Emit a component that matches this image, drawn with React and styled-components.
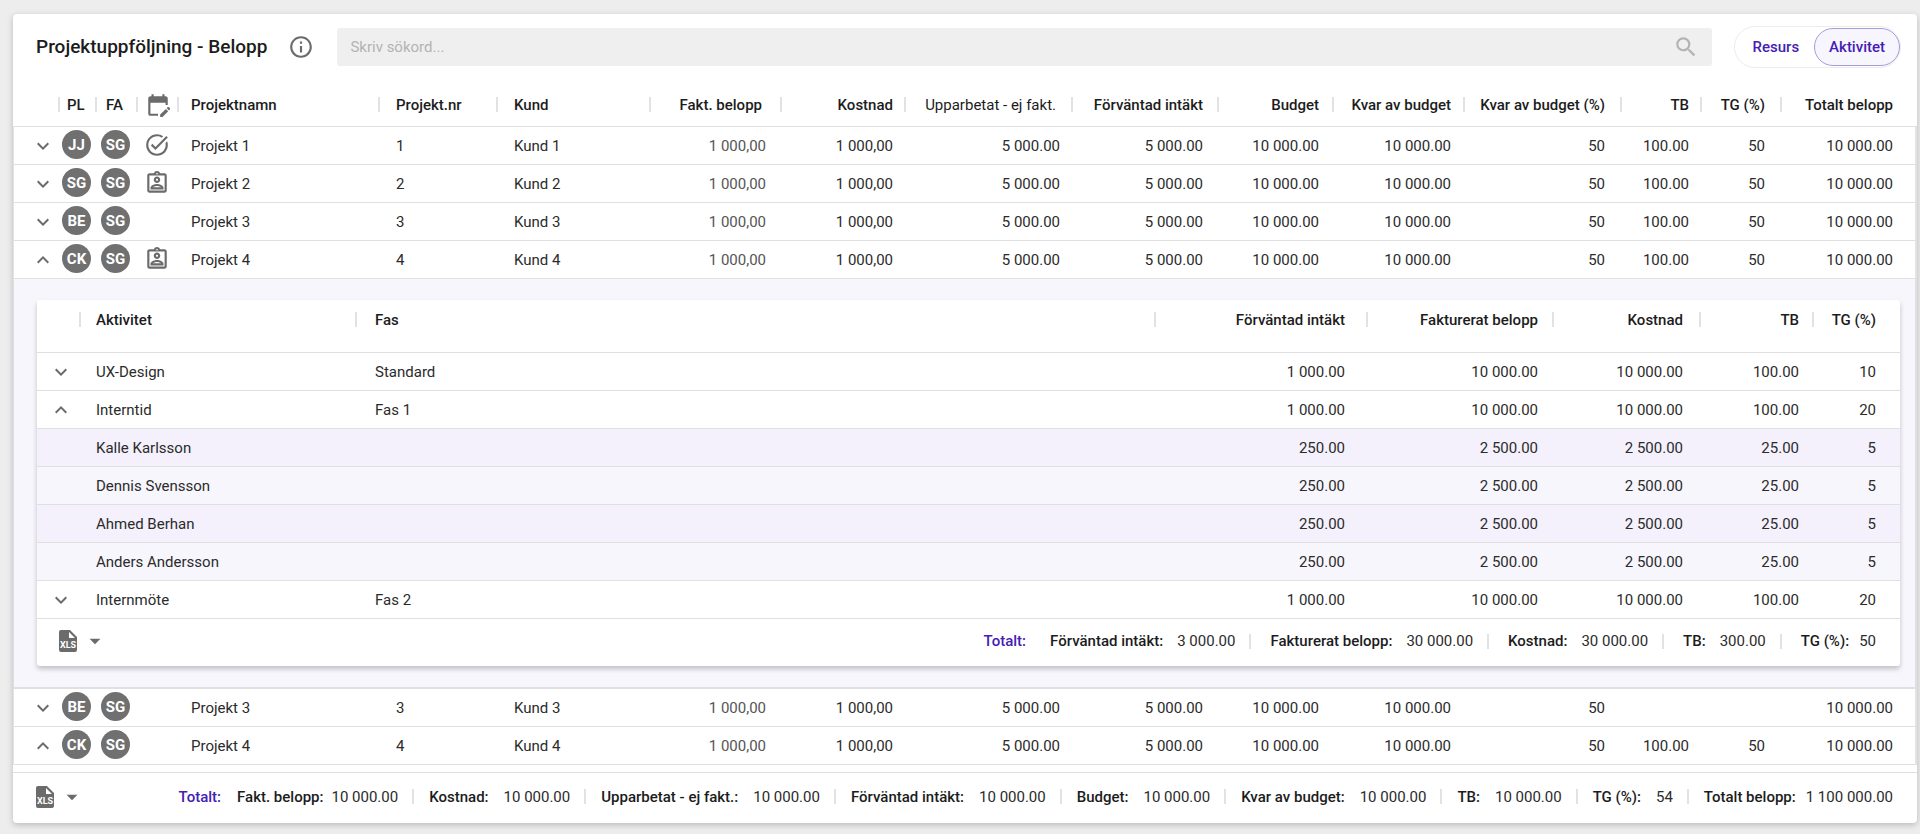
import React, { Fragment, useState } from 'react'
import styled, { createGlobalStyle } from 'styled-components'
import {
  MdArrowDropDown,
  MdEditCalendar,
  MdInfoOutline,
  MdKeyboardArrowDown,
  MdKeyboardArrowUp,
  MdOutlineAssignmentInd,
  MdSearch,
  MdTaskAlt,
} from 'react-icons/md'

const GlobalStyle = createGlobalStyle`
  * {
    box-sizing: border-box;
  }
  body {
    margin: 0;
    background: #ededed;
    color: #2b2b2b;
    font-family: Roboto, "Liberation Sans", sans-serif;
    font-size: 15px;
    line-height: 16px;
  }
  button, input {
    font: inherit;
  }
`

const Style = {
  Page: styled.main`
    padding: 14px 3px 12px 13px;
  `,
  Panel: styled.section`
    background: #fff;
    border-radius: 4px;
    box-shadow: 0 2px 6px rgba(0, 0, 0, 0.22);
  `,
  TopBar: styled.header`
    display: flex;
    align-items: center;
    height: 65px;
    padding: 0 16px 0 23px;
  `,
  Title: styled.h1`
    margin: 0 21px 0 0;
    color: #1c1c1c;
    font-weight: 500;
    font-size: 19px;
    line-height: 24px;
    white-space: nowrap;
  `,
  IconButton: styled.button`
    display: flex;
    align-items: center;
    gap: 5px;
    padding: 0;
    border: 0;
    background: none;
    color: #6b6b6b;
    cursor: pointer;
  `,
  Search: styled.label`
    display: flex;
    flex: 1;
    align-items: center;
    height: 38px;
    margin: 0 22px 0 23px;
    padding: 0 13px;
    border-radius: 3px;
    background: #efefef;
    color: #b3b3b3;
  `,
  SearchInput: styled.input`
    flex: 1;
    min-width: 0;
    padding: 0;
    border: 0;
    outline: 0;
    background: none;
    color: #2b2b2b;
    &::placeholder {
      color: #b3b3b3;
      opacity: 1;
    }
  `,
  Toggle: styled.div`
    display: flex;
    align-items: center;
    height: 42px;
    padding-left: 3px;
    border: 1px solid #ececec;
    border-radius: 21px;
  `,
  ToggleButton: styled.button`
    height: 38px;
    padding: 0 14px;
    border: 1px solid ${(props) => (props.$active ? '#a99ad9' : 'transparent')};
    border-radius: 19px;
    background: ${(props) => (props.$active ? '#f7f5fd' : 'none')};
    color: #4520b4;
    font-weight: 500;
    cursor: pointer;
  `,
  Table: styled.table`
    width: 100%;
    table-layout: fixed;
    border-collapse: separate;
    border-spacing: 0;
  `,
  Col: styled.col`
    width: ${(props) => (props.$width ? `${props.$width}px` : 'auto')};
  `,
  HeadCell: styled.th`
    height: ${(props) => props.$height}px;
    padding: ${(props) => props.$top}px 0 0;
    border-bottom: 1px solid #e0e0e0;
    color: #1c1c1c;
    font-weight: ${(props) => (props.$light ? 400 : 500)};
    text-align: left;
    vertical-align: top;
    white-space: nowrap;
  `,
  HeadLabel: styled.div`
    display: flex;
    align-items: center;
    justify-content: ${(props) => (props.$align === 'right' ? 'flex-end' : 'flex-start')};
    height: 15px;
    padding: 0 ${(props) => props.$end || 0}px 0 ${(props) => props.$start || 0}px;
    border-left: 2px solid ${(props) => (props.$line ? '#e2e2e2' : 'transparent')};
    svg {
      flex: none;
      color: #6b6b6b;
    }
  `,
  Row: styled.tr`
    background: ${(props) => props.$background || '#fff'};
  `,
  Cell: styled.td`
    height: 38px;
    padding: 0 ${(props) => props.$end || 0}px 0 ${(props) => props.$start || 0}px;
    border-bottom: 1px solid #e0e0e0;
    text-align: ${(props) => props.$align || 'left'};
    vertical-align: middle;
    white-space: nowrap;
    color: ${(props) => (props.$muted ? '#555' : 'inherit')};
    &:last-child {
      border-right: ${(props) => (props.$edge ? '2px solid #e3e3e3' : '0')};
    }
  `,
  IconCell: styled.td`
    height: 38px;
    padding: 0 0 ${(props) => (props.$raised ? 2 : 0)}px ${(props) => props.$start}px;
    border-bottom: 1px solid #e0e0e0;
    border-left: ${(props) => (props.$edge ? '1px solid #e3e3e3' : '0')};
    color: #6b6b6b;
    vertical-align: middle;
    > svg {
      display: block;
    }
  `,
  Avatar: styled.span`
    display: flex;
    align-items: center;
    justify-content: center;
    width: 29px;
    height: 29px;
    border-radius: 50%;
    background: #707070;
    color: #fff;
    font-weight: 700;
  `,
  DetailCell: styled.td`
    padding: 21px 15px 21px 23px;
    border: solid #e0e0e0;
    border-width: 0 2px 2px 1px;
    background: #f8f6fd;
  `,
  Card: styled.section`
    border-radius: 3px;
    background: #fff;
    box-shadow: 0 3px 5px rgba(0, 0, 0, 0.22);
  `,
  Spacer: styled.div`
    height: 7px;
  `,
  Footer: styled.footer`
    display: flex;
    align-items: center;
    justify-content: space-between;
    height: ${(props) => props.$height}px;
    padding: 0 ${(props) => props.$end}px 3px ${(props) => props.$start}px;
    border-top: ${(props) => (props.$line ? '1px solid #e0e0e0' : '0')};
  `,
  Totals: styled.dl`
    display: flex;
    align-items: center;
    margin: 0;
    white-space: nowrap;
  `,
  TotalsTitle: styled.span`
    margin-right: ${(props) => props.$gap}px;
    color: #4520b4;
    font-weight: 500;
  `,
  Total: styled.div`
    display: flex;
    align-items: center;
    &:not(:first-of-type)::before {
      content: "";
      width: 2px;
      height: 15px;
      margin: 0 ${(props) => props.$gap}px 0 14px;
      background: #e2e2e2;
    }
    dt {
      margin-right: ${(props) => props.$labelGap}px;
      color: #1c1c1c;
      font-weight: 500;
    }
    dd {
      margin: 0;
    }
  `,
}

const projectColumns = [
  { key: 'open', width: 45 },
  { key: 'pl', label: 'PL', width: 37, start: 7 },
  { key: 'fa', label: 'FA', width: 41, start: 9 },
  { key: 'status', icon: true, width: 41, start: 7 },
  { key: 'name', label: 'Projektnamn', start: 12 },
  { key: 'nr', label: 'Projekt.nr', width: 118, start: 16 },
  { key: 'customer', label: 'Kund', width: 153, start: 16 },
  { key: 'invoiced', label: 'Fakt. belopp', width: 131, align: 'right', end: 14, headEnd: 18, muted: true },
  { key: 'cost', label: 'Kostnad', width: 124, align: 'right', end: 11 },
  { key: 'worked', label: 'Upparbetat - ej fakt.', width: 167, align: 'right', end: 11, headEnd: 15, light: true },
  { key: 'expected', label: 'Förväntad intäkt', width: 146, align: 'right', end: 14 },
  { key: 'budget', label: 'Budget', width: 115, align: 'right', end: 13 },
  { key: 'left', label: 'Kvar av budget', width: 131, align: 'right', end: 12 },
  { key: 'leftPercent', label: 'Kvar av budget (%)', width: 157, align: 'right', end: 15 },
  { key: 'tb', label: 'TB', width: 80, align: 'right', end: 11 },
  { key: 'tg', label: 'TG (%)', width: 80, align: 'right', end: 15 },
  { key: 'total', label: 'Totalt belopp', width: 137, align: 'right', end: 22, headEnd: 24 },
]

const amounts = {
  fa: 'SG',
  invoiced: '1 000,00',
  cost: '1 000,00',
  worked: '5 000.00',
  expected: '5 000.00',
  budget: '10 000.00',
  left: '10 000.00',
  leftPercent: '50',
  tb: '100.00',
  tg: '50',
  total: '10 000.00',
}

const projects = [
  { ...amounts, id: 1, pl: 'JJ', status: 'done', name: 'Projekt 1', nr: '1', customer: 'Kund 1' },
  { ...amounts, id: 2, pl: 'SG', status: 'assigned', name: 'Projekt 2', nr: '2', customer: 'Kund 2' },
  { ...amounts, id: 3, pl: 'BE', name: 'Projekt 3', nr: '3', customer: 'Kund 3' },
  { ...amounts, id: 4, pl: 'CK', status: 'assigned', name: 'Projekt 4', nr: '4', customer: 'Kund 4', open: true, detail: true },
  { ...amounts, id: 5, pl: 'BE', name: 'Projekt 3', nr: '3', customer: 'Kund 3', tb: '', tg: '' },
  { ...amounts, id: 6, pl: 'CK', name: 'Projekt 4', nr: '4', customer: 'Kund 4', open: true },
]

const activityColumns = [
  { key: 'open', width: 42 },
  { key: 'name', label: 'Aktivitet', width: 276, start: 15 },
  { key: 'phase', label: 'Fas', start: 18 },
  { key: 'expected', label: 'Förväntad intäkt', width: 212, align: 'right', end: 21 },
  { key: 'invoiced', label: 'Fakturerat belopp', width: 186, align: 'right', end: 14 },
  { key: 'cost', label: 'Kostnad', width: 147, align: 'right', end: 16 },
  { key: 'tb', label: 'TB', width: 113, align: 'right', end: 13 },
  { key: 'tg', label: 'TG (%)', width: 88, align: 'right', end: 24 },
]

const activityAmounts = { expected: '1 000.00', invoiced: '10 000.00', cost: '10 000.00', tb: '100.00' }
const memberAmounts = { member: true, expected: '250.00', invoiced: '2 500.00', cost: '2 500.00', tb: '25.00', tg: '5' }

const activities = [
  { ...activityAmounts, name: 'UX-Design', phase: 'Standard', tg: '10' },
  { ...activityAmounts, name: 'Interntid', phase: 'Fas 1', tg: '20', open: true },
  { ...memberAmounts, name: 'Kalle Karlsson', background: '#f4f1fd' },
  { ...memberAmounts, name: 'Dennis Svensson', background: '#f8f6fd' },
  { ...memberAmounts, name: 'Ahmed Berhan', background: '#f4f1fd' },
  { ...memberAmounts, name: 'Anders Andersson', background: '#f8f6fd' },
  { ...activityAmounts, name: 'Internmöte', phase: 'Fas 2', tg: '20' },
]

// label, value, gap between them when it differs from the bar's own
const activityTotals = [
  ['Förväntad intäkt:', '3 000.00'],
  ['Fakturerat belopp:', '30 000.00'],
  ['Kostnad:', '30 000.00'],
  ['TB:', '300.00'],
  ['TG (%):', '50', 10],
]

const projectTotals = [
  ['Fakt. belopp:', '10 000.00', 8],
  ['Kostnad:', '10 000.00'],
  ['Upparbetat - ej fakt.:', '10 000.00'],
  ['Förväntad intäkt:', '10 000.00'],
  ['Budget:', '10 000.00'],
  ['Kvar av budget:', '10 000.00'],
  ['TB:', '10 000.00'],
  ['TG (%):', '54'],
  ['Totalt belopp:', '1 100 000.00', 10],
]

function XlsIcon() {
  return (
    <svg width="18" height="22" viewBox="0 0 18 22" aria-hidden="true">
      <path
        fill="#6b6b6b"
        fillRule="evenodd"
        d="M2 0h9l7 7v13a2 2 0 0 1-2 2H2a2 2 0 0 1-2-2V2a2 2 0 0 1 2-2zm8 2v6h6z"
      />
      <text x="9" y="18" fill="#fff" fontSize="9" fontWeight="700" textAnchor="middle">XLS</text>
    </svg>
  )
}

function ExportButton() {
  return (
    <Style.IconButton type="button" aria-label="Exportera XLS">
      <XlsIcon />
      <MdArrowDropDown size={26} />
    </Style.IconButton>
  )
}

function Chevron({ open, name }) {
  return (
    <Style.IconButton type="button" aria-expanded={!!open} aria-label={name}>
      {open ? <MdKeyboardArrowUp size={24} /> : <MdKeyboardArrowDown size={24} />}
    </Style.IconButton>
  )
}

function TableHead({ columns, height, top }) {
  return (
    <>
      <colgroup>
        {columns.map((col) => <Style.Col key={col.key} $width={col.width} />)}
      </colgroup>
      <thead>
        <tr>
          {columns.map((col, i) => (
            <Style.HeadCell key={col.key} scope="col" $height={height} $top={top} $light={col.light}>
              <Style.HeadLabel
                $line={i > 0}
                $align={col.align}
                $start={col.start}
                $end={col.headEnd || col.end}
              >
                {col.icon ? <MdEditCalendar size={26} /> : col.label}
              </Style.HeadLabel>
            </Style.HeadCell>
          ))}
        </tr>
      </thead>
    </>
  )
}

function Totals({ items, gap, labelGap, titleGap }) {
  return (
    <Style.Totals>
      <Style.TotalsTitle $gap={titleGap}>Totalt:</Style.TotalsTitle>
      {items.map(([label, value, ownGap]) => (
        <Style.Total key={label} $gap={gap} $labelGap={ownGap || labelGap}>
          <dt>{label}</dt>
          <dd>{value}</dd>
        </Style.Total>
      ))}
    </Style.Totals>
  )
}

// cells have no separator line, so they start 2px further in than the labels
const cellStart = (col) => col.start && col.start + 2

function ActivityCard() {
  return (
    <Style.Card>
      <Style.Table>
        <TableHead columns={activityColumns} height={53} top={12} />
        <tbody>
          {activities.map((activity) => (
            <Style.Row key={activity.name} $background={activity.background}>
              <Style.IconCell $start={12}>
                {!activity.member && <Chevron open={activity.open} name={activity.name} />}
              </Style.IconCell>
              {activityColumns.slice(1).map((col) => (
                <Style.Cell key={col.key} $align={col.align} $start={cellStart(col)} $end={col.end}>
                  {activity[col.key]}
                </Style.Cell>
              ))}
            </Style.Row>
          ))}
        </tbody>
      </Style.Table>
      <Style.Footer $height={47} $start={22} $end={24}>
        <ExportButton />
        <Totals items={activityTotals} gap={19} labelGap={14} titleGap={24} />
      </Style.Footer>
    </Style.Card>
  )
}

function ProjectRow({ project }) {
  return (
    <Style.Row>
      <Style.IconCell $start={17} $edge>
        <Chevron open={project.open} name={project.name} />
      </Style.IconCell>
      <Style.IconCell $start={4} $raised>
        <Style.Avatar>{project.pl}</Style.Avatar>
      </Style.IconCell>
      <Style.IconCell $start={6} $raised>
        <Style.Avatar>{project.fa}</Style.Avatar>
      </Style.IconCell>
      <Style.IconCell $start={8} $raised>
        {project.status === 'done' && <MdTaskAlt size={26} />}
        {project.status === 'assigned' && <MdOutlineAssignmentInd size={26} />}
      </Style.IconCell>
      {projectColumns.slice(4).map((col) => (
        <Style.Cell
          key={col.key}
          $edge
          $align={col.align}
          $start={cellStart(col)}
          $end={col.end}
          $muted={col.muted}
        >
          {project[col.key]}
        </Style.Cell>
      ))}
    </Style.Row>
  )
}

function App() {
  const [view, setView] = useState('Aktivitet')
  return (
    <Style.Page>
      <GlobalStyle />
      <Style.Panel>
        <Style.TopBar>
          <Style.Title>Projektuppföljning - Belopp</Style.Title>
          <Style.IconButton type="button" aria-label="Information">
            <MdInfoOutline size={26} />
          </Style.IconButton>
          <Style.Search>
            <Style.SearchInput type="text" placeholder="Skriv sökord..." aria-label="Skriv sökord" />
            <MdSearch size={26} />
          </Style.Search>
          <Style.Toggle>
            {['Resurs', 'Aktivitet'].map((name) => (
              <Style.ToggleButton
                key={name}
                type="button"
                aria-pressed={view === name}
                $active={view === name}
                onClick={() => setView(name)}
              >
                {name}
              </Style.ToggleButton>
            ))}
          </Style.Toggle>
        </Style.TopBar>
        <Style.Table>
          <TableHead columns={projectColumns} height={48} top={18} />
          <tbody>
            {projects.map((project) => (
              <Fragment key={project.id}>
                <ProjectRow project={project} />
                {project.detail && (
                  <tr>
                    <Style.DetailCell colSpan={projectColumns.length}>
                      <ActivityCard />
                    </Style.DetailCell>
                  </tr>
                )}
              </Fragment>
            ))}
          </tbody>
        </Style.Table>
        <Style.Spacer />
        <Style.Footer $height={51} $start={23} $end={24} $line>
          <ExportButton />
          <Totals items={projectTotals} gap={15} labelGap={15} titleGap={16} />
        </Style.Footer>
      </Style.Panel>
    </Style.Page>
  )
}

export default App
